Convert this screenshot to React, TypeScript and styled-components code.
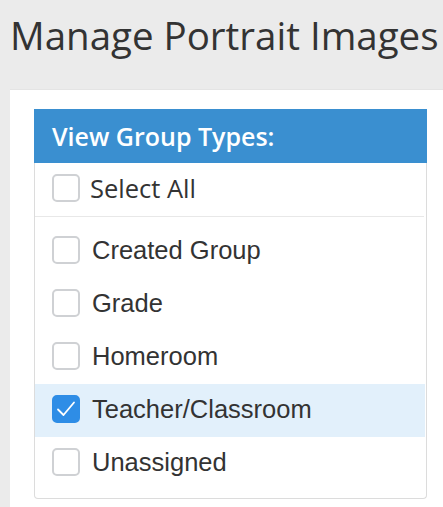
import styled, { createGlobalStyle } from "styled-components";

const GlobalStyle = createGlobalStyle`
  html, body {
    margin: 0;
    padding: 0;
    background: #ebebeb;
  }
`;

const Page = styled.div`
  padding-left: 10px;
  height: 507px;
  overflow: hidden;
`;

const Title = styled.h1`
  margin: 0;
  padding: 10px 0 0 0;
  height: 89px;
  box-sizing: border-box;
  font-family: "Open Sans", sans-serif;
  font-weight: 400;
  font-size: 38.5px;
  line-height: 50px;
  color: #333;
  white-space: nowrap;
`;

const Panel = styled.div`
  background: #fff;
  border-top: 1px solid #e4e4e4;
  padding: 19px 0 0 24px;
  min-height: 420px;
`;

const Box = styled.div`
  width: 393px;
`;

const Header = styled.div`
  height: 54px;
  display: flex;
  align-items: center;
  padding-left: 18px;
  background: #3a8fd0;
  color: #fff;
  font-family: "Open Sans", sans-serif;
  font-weight: 600;
  font-size: 25px;
`;

const List = styled.div`
  border: 1px solid #dcdcdc;
  border-top: none;
  border-radius: 0 0 4px 4px;
  padding-bottom: 8px;
`;

const SelectAllRow = styled.label`
  display: flex;
  align-items: center;
  gap: 10px;
  height: 54px;
  padding-left: 17px;
  margin-right: 2px;
  border-bottom: 1px solid #e8e8e8;
  margin-bottom: 8px;
  box-sizing: border-box;
  font-family: "Open Sans", sans-serif;
  font-size: 25.5px;
  color: #333;
  padding-bottom: 4px;
`;

const Row = styled.label<{ $active?: boolean }>`
  display: flex;
  align-items: center;
  gap: 12px;
  height: 53px;
  padding-left: 17px;
  padding-bottom: 3px;
  box-sizing: border-box;
  margin-right: 1px;
  background: ${(p) => (p.$active ? "#e2f0fb" : "transparent")};
  font-family: "Liberation Sans", Arial, sans-serif;
  font-size: 25.5px;
  color: #333;
`;

const Check = styled.span<{ $checked?: boolean }>`
  flex: none;
  width: 28px;
  height: 28px;
  box-sizing: border-box;
  border-radius: 5px;
  border: 2px solid ${(p) => (p.$checked ? "#2e8de6" : "#cfd1d4")};
  background: ${(p) => (p.$checked ? "#2e8de6" : "#fff")};
  display: flex;
  align-items: center;
  justify-content: center;
`;

const CheckBox = ({ checked }: { checked?: boolean }) => (
  <Check $checked={checked}>
    {checked && (
      <svg width="22" height="22" viewBox="0 0 22 22">
        <path
          d="M3 11.5 L8.5 17 L19 4.5"
          fill="none"
          stroke="#fff"
          strokeWidth="1.8"
          strokeLinecap="round"
          strokeLinejoin="round"
        />
      </svg>
    )}
  </Check>
);

const groups = [
  { name: "Created Group", checked: false },
  { name: "Grade", checked: false },
  { name: "Homeroom", checked: false },
  { name: "Teacher/Classroom", checked: true },
  { name: "Unassigned", checked: false },
];

export default function App() {
  return (
    <Page>
      <GlobalStyle />
      <Title>Manage Portrait Images</Title>
      <Panel>
        <Box>
          <Header>View Group Types:</Header>
          <List>
            <SelectAllRow>
              <CheckBox />
              Select All
            </SelectAllRow>
            {groups.map((g) => (
              <Row key={g.name} $active={g.checked}>
                <CheckBox checked={g.checked} />
                {g.name}
              </Row>
            ))}
          </List>
        </Box>
      </Panel>
    </Page>
  );
}
